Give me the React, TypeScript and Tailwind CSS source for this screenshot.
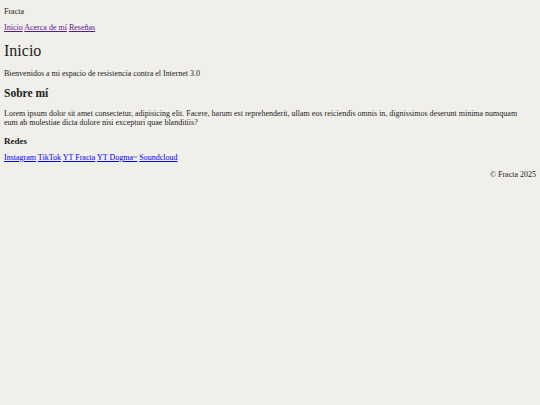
const linkVisited = "text-[#551a8b] underline";
const link = "text-[#0000ee] underline";

export default function App() {
  return (
    <div
      className="min-h-screen bg-[#f0efe9] px-[4px] pt-[7px] text-[8px] leading-[9px] text-[#1c1c1c] flex flex-col"
      style={{ fontFamily: '"Liberation Serif", serif' }}
    >
      {/* Header */}
      <header className="flex flex-col">
        <p>Fracta</p>
        <nav className="mt-[7px]">
          <a href="#" className={linkVisited}>Inicio</a>{" "}
          <a href="#" className={linkVisited}>Acerca de mí</a>{" "}
          <a href="#" className={linkVisited}>Reseñas</a>
        </nav>
      </header>

      <main className="flex flex-col">
        <h1 className="mt-[10px] text-[16px] leading-[18px] font-normal">Inicio</h1>
        <p className="mt-[9px]">
          Bienvenidos a mi espacio de resistencia contra el Internet 3.0
        </p>

        <h2 className="mt-[8px] text-[11.5px] leading-[14px] font-bold">Sobre mí</h2>
        <p className="mt-[9px] max-w-[522px]">
          Lorem ipsum dolor sit amet consectetur, adipisicing elit. Facere, harum est
          reprehenderit, ullam eos reiciendis omnis in, dignissimos deserunt minima
          numquam eum ab molestiae dicta dolore nisi excepturi quae blanditiis?
        </p>

        <h3 className="mt-[9px] text-[9px] leading-[11px] font-bold">Redes</h3>
        <p className="mt-[6px]">
          <a href="#" className={link}>Instagram</a>{" "}
          <a href="#" className={link}>TikTok</a>{" "}
          <a href="#" className={link}>YT Fracta</a>{" "}
          <a href="#" className={link}>YT Dogma~</a>{" "}
          <a href="#" className={link}>Soundcloud</a>
        </p>
      </main>

      <footer className="mt-[8px]">
        <p className="text-right">© Fracta 2025</p>
      </footer>
    </div>
  );
}
